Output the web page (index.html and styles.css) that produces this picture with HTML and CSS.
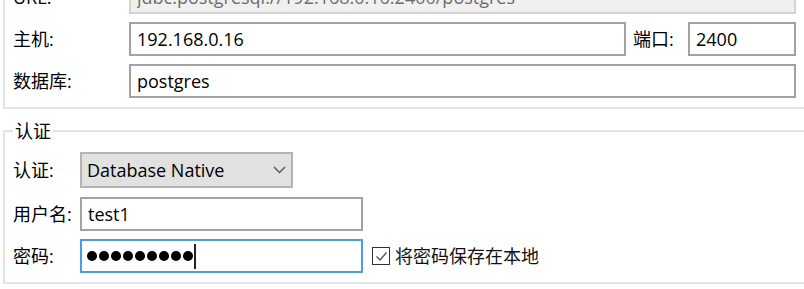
FILE: index.html
```html
<!DOCTYPE html>
<html lang="zh-CN">
<head>
<meta charset="utf-8">
<title>连接设置</title>
<link rel="stylesheet" href="styles.css">
</head>
<body>
<div class="page">
  <div class="conn">
    <div class="row">
      <span class="label">URL:</span>
      <input class="field field-full field-disabled" type="text" readonly value="jdbc:postgresql://192.168.0.16:2400/postgres">
    </div>
    <div class="row">
      <span class="label">主机:</span>
      <input class="field field-host" type="text" readonly value="192.168.0.16">
      <span class="label-port">端口:</span>
      <input class="field field-port" type="text" readonly value="2400">
    </div>
    <div class="row">
      <span class="label">数据库:</span>
      <input class="field field-full" type="text" readonly value="postgres">
    </div>
  </div>

  <fieldset class="auth">
    <legend class="auth-legend">认证</legend>
    <div class="row row-combo">
      <span class="label label-auth">认证:</span>
      <div class="combo">
        <span class="combo-text">Database Native</span>
        <svg class="chevron" width="13" height="8" viewBox="0 0 13 8"><path d="M1 1 L6.5 6.5 L12 1" fill="none" stroke="#555" stroke-width="1.4"/></svg>
      </div>
    </div>
    <div class="row">
      <span class="label label-auth">用户名:</span>
      <input class="field field-user" type="text" readonly value="test1">
    </div>
    <div class="row">
      <span class="label label-auth">密码:</span>
      <div class="field field-user field-focus">
        <span class="dot"></span><span class="dot"></span><span class="dot"></span><span class="dot"></span><span class="dot"></span><span class="dot"></span><span class="dot"></span><span class="dot"></span><span class="dot"></span><span class="caret"></span>
      </div>
      <label class="check">
        <span class="check-box"><svg width="15" height="15" viewBox="0 0 15 15"><path d="M2.5 7.5 L6 11 L12.5 3.5" fill="none" stroke="#555" stroke-width="1.4"/></svg></span>
        <span class="check-text">将密码保存在本地</span>
      </label>
    </div>
  </fieldset>
</div>
</body>
</html>
```

FILE: styles.css
```css
html, body {
  margin: 0;
  padding: 0;
  background: #ffffff;
}

body {
  width: 804px;
  height: 289px;
  overflow: hidden;
  font-family: "Open Sans", "Noto Sans CJK SC", sans-serif;
  font-size: 18px;
  line-height: 24px;
  color: #000;
}

.page {
  width: 804px;
}

.conn {
  margin: -20px 0 0 3px;
  width: 840px;
  border-left: 2px solid #e3e3e3;
  border-bottom: 2px solid #e3e3e3;
  padding: 0 0 9px 8px;
  box-sizing: border-box;
}

.row {
  display: flex;
  align-items: center;
  height: 34px;
  margin-bottom: 8px;
}

.row:last-child {
  margin-bottom: 0;
}

.label {
  width: 116px;
  flex: none;
  white-space: nowrap;
}

.label-auth {
  width: 67px;
}

.field {
  box-sizing: border-box;
  height: 34px;
  border: 2px solid #a2a2a2;
  padding: 0 6px;
  margin: 0;
  font: inherit;
  line-height: 24px;
  color: #000;
  background: #fff;
  outline: none;
  flex: none;
}

.field-full {
  width: 667px;
}

.field-disabled {
  background: #f0f0f0;
  border-color: #d4d4d4;
  color: #6d6d6d;
}

.field-host {
  width: 497px;
}

.label-port {
  width: 55px;
  margin-left: 7px;
  flex: none;
}

.field-port {
  width: 108px;
}

.auth {
  margin: 10px 0 0 3px;
  width: 840px;
  box-sizing: border-box;
  border: 2px solid #e3e3e3;
  padding: 9px 0 9px 8px;
  min-width: 0;
}

.auth-legend {
  padding: 0 2px;
  margin-left: 0;
  line-height: 24px;
}

.row-combo {
  height: 36px;
  margin-bottom: 9px;
}

.combo {
  box-sizing: border-box;
  width: 213px;
  height: 36px;
  border: 2px solid #b4b4b4;
  background: #e1e1e1;
  display: flex;
  align-items: center;
  justify-content: space-between;
  padding: 0 5px 0 5px;
}

.field-user {
  width: 283px;
}

.field-focus {
  border-color: #4a9de6;
  display: flex;
  align-items: center;
  gap: 2px;
  padding-left: 5px;
}

.dot {
  width: 10px;
  height: 10px;
  border-radius: 50%;
  background: #000;
  flex: none;
}

.caret {
  width: 2px;
  height: 25px;
  background: #222;
  margin-left: -1px;
}

.check {
  display: flex;
  align-items: center;
  margin-left: 9px;
}

.check-box {
  box-sizing: border-box;
  width: 18px;
  height: 18px;
  border: 1.5px solid #333;
  display: flex;
  align-items: center;
  justify-content: center;
  background: #fff;
}

.check-text {
  margin-left: 5px;
  color: #111;
}
```
